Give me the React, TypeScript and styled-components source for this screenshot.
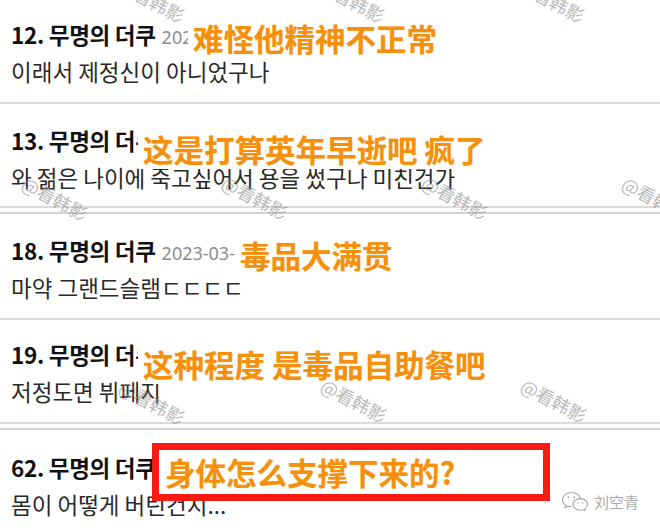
import React from "react";
import styled, { createGlobalStyle } from "styled-components";

const GlobalStyle = createGlobalStyle`
  html, body { margin: 0; padding: 0; background: #fff; }
  body { width: 660px; height: 530px; overflow: hidden; }
`;

const Page = styled.div`
  position: relative;
  width: 660px;
  height: 530px;
  overflow: hidden;
  background: #fff;
  display: flex;
  flex-direction: column;
  font-family: "Noto Sans CJK KR", "Noto Sans", sans-serif;
`;

const Row = styled.section<{ $height: number; $padTop: number }>`
  position: relative;
  box-sizing: border-box;
  height: ${(p) => p.$height}px;
  padding: ${(p) => p.$padTop}px 12px 0 11px;
  display: flex;
  flex-direction: column;
  gap: 7px;
  flex-shrink: 0;
`;

const Header = styled.div`
  display: flex;
  align-items: baseline;
  gap: 6px;
  height: 30px;
  line-height: 30px;
  white-space: nowrap;
`;

const Author = styled.span`
  font-size: 22.5px;
  font-weight: 700;
  color: #111;
  letter-spacing: -0.3px;
`;

const Stamp = styled.span`
  font-family: "Noto Sans", "Noto Sans CJK KR", sans-serif;
  font-size: 18px;
  color: #8c8c8c;
`;

const Body = styled.p`
  margin: 0;
  font-size: 22.5px;
  line-height: 30px;
  color: #2a2a2a;
  white-space: nowrap;
`;

const Divider = styled.div<{ $double?: boolean }>`
  flex-shrink: 0;
  box-sizing: border-box;
  height: ${(p) => (p.$double ? 8 : 2)}px;
  border-top: 2px solid #dcdcdf;
  border-bottom: ${(p) => (p.$double ? "2px solid #d3d3d6" : "none")};
`;

const Caption = styled.div<{ $left: number; $top: number }>`
  position: absolute;
  left: ${(p) => p.$left}px;
  top: ${(p) => p.$top}px;
  padding: 2px 5px;
  background: #fff;
  font-family: "Noto Sans CJK SC", "Noto Sans", sans-serif;
  font-weight: 700;
  font-size: 30.5px;
  line-height: 36px;
  color: #f5900f;
  white-space: nowrap;
  text-shadow: 0 0 1px rgba(255, 200, 120, 0.8);
`;

const BoxedCaption = styled(Caption)`
  box-sizing: border-box;
  width: 398px;
  height: 58px;
  padding: 0 6px;
  line-height: 44px;
  border: 7px solid #fb1b12;
`;

const MarkLayer = styled.div`
  position: absolute;
  inset: 0;
  pointer-events: none;
`;

const Mark = styled.span<{ $x: number; $y: number }>`
  position: absolute;
  left: ${(p) => p.$x}px;
  top: ${(p) => p.$y}px;
  transform: translate(-50%, -50%) rotate(28deg);
  font-family: "Noto Sans CJK SC", sans-serif;
  font-size: 18px;
  line-height: 1;
  white-space: nowrap;
  color: rgba(140, 140, 140, 0.62);
`;

const Signature = styled.div`
  position: absolute;
  right: 21px;
  bottom: 19px;
  display: flex;
  align-items: center;
  gap: 5px;
  font-family: "Noto Sans CJK SC", sans-serif;
  font-size: 15px;
  line-height: 1;
  color: rgba(140, 140, 140, 0.75);
`;

const ChatLogo = () => (
  <svg width="28" height="20" viewBox="0 0 28 20" fill="none">
    <path
      d="M10.5 1.5c-5 0-9 3.2-9 7.2 0 2.3 1.3 4.3 3.3 5.6L4 16.6l2.8-1.4c1.1.3 2.3.5 3.6.5"
      stroke="#a8a8a8"
      strokeWidth="1.1"
      fill="#fff"
    />
    <path d="M10.5 1.5c4.6 0 8.4 2.7 8.9 6.2" stroke="#a8a8a8" strokeWidth="1.1" />
    <circle cx="7.4" cy="6.3" r="1" fill="#a8a8a8" />
    <circle cx="13.3" cy="6.3" r="1" fill="#a8a8a8" />
    <path
      d="M19.3 7.6c-4.1 0-7.3 2.6-7.3 5.8s3.2 5.8 7.3 5.8c.9 0 1.8-.1 2.6-.4l2.3 1.1-.6-2c1.8-1.1 3-2.7 3-4.5 0-3.2-3.2-5.8-7.3-5.8z"
      stroke="#a8a8a8"
      strokeWidth="1.1"
      fill="#fff"
    />
    <circle cx="17" cy="12" r=".8" fill="#a8a8a8" />
    <circle cx="21.6" cy="12" r=".8" fill="#a8a8a8" />
  </svg>
);

type Comment = {
  no: number;
  date: string;
  body: string;
  height: number;
  padTop: number;
  caption: string;
  capLeft: number;
  capTop: number;
  boxed?: boolean;
  doubleRule?: boolean;
  last?: boolean;
};

const comments: Comment[] = [
  {
    no: 12,
    date: "2023-03-14 10:21",
    body: "이래서 제정신이 아니었구나",
    height: 102,
    padTop: 19,
    caption: "难怪他精神不正常",
    capLeft: 188,
    capTop: 18,
  },
  {
    no: 13,
    date: "2023-03-14 10:22",
    body: "와 젊은 나이에 죽고싶어서 용을 썼구나 미친건가",
    height: 102,
    padTop: 21,
    caption: "这是打算英年早逝吧 疯了",
    capLeft: 138,
    capTop: 25,
    doubleRule: true,
  },
  {
    no: 18,
    date: "2023-03-14 10:25",
    body: "마약 그랜드슬램ㄷㄷㄷㄷ",
    height: 104,
    padTop: 21,
    caption: "毒品大满贯",
    capLeft: 235,
    capTop: 21,
  },
  {
    no: 19,
    date: "2023-03-14 10:25",
    body: "저정도면 뷔페지",
    height: 102,
    padTop: 19,
    caption: "这种程度 是毒品自助餐吧",
    capLeft: 138,
    capTop: 24,
    doubleRule: true,
  },
  {
    no: 62,
    date: "2023-03-14 10:41",
    body: "몸이 어떻게 버틴건지...",
    height: 101,
    padTop: 22,
    caption: "身体怎么支撑下来的?",
    capLeft: 152,
    capTop: 13,
    boxed: true,
    last: true,
  },
];

const marks: Array<[number, number]> = [
  [152, 0],
  [352, 0],
  [552, 0],
  [55, 198],
  [255, 197],
  [455, 197],
  [655, 198],
  [152, 402],
  [354, 400],
  [554, 400],
];

export default function App() {
  return (
    <>
      <GlobalStyle />
      <Page>
        {comments.map((c) => (
          <React.Fragment key={c.no}>
            <Row $height={c.height} $padTop={c.padTop}>
              <Header>
                <Author>{c.no}. 무명의 더쿠</Author>
                <Stamp>{c.date}</Stamp>
              </Header>
              <Body>{c.body}</Body>
              {c.boxed ? (
                <BoxedCaption $left={c.capLeft} $top={c.capTop}>
                  {c.caption}
                </BoxedCaption>
              ) : (
                <Caption $left={c.capLeft} $top={c.capTop}>
                  {c.caption}
                </Caption>
              )}
            </Row>
            {!c.last && <Divider $double={c.doubleRule} />}
          </React.Fragment>
        ))}
        <MarkLayer>
          {marks.map(([x, y], i) => (
            <Mark key={i} $x={x} $y={y}>
              @看韩影
            </Mark>
          ))}
        </MarkLayer>
        <Signature>
          <ChatLogo />
          刘空青
        </Signature>
      </Page>
    </>
  );
}
